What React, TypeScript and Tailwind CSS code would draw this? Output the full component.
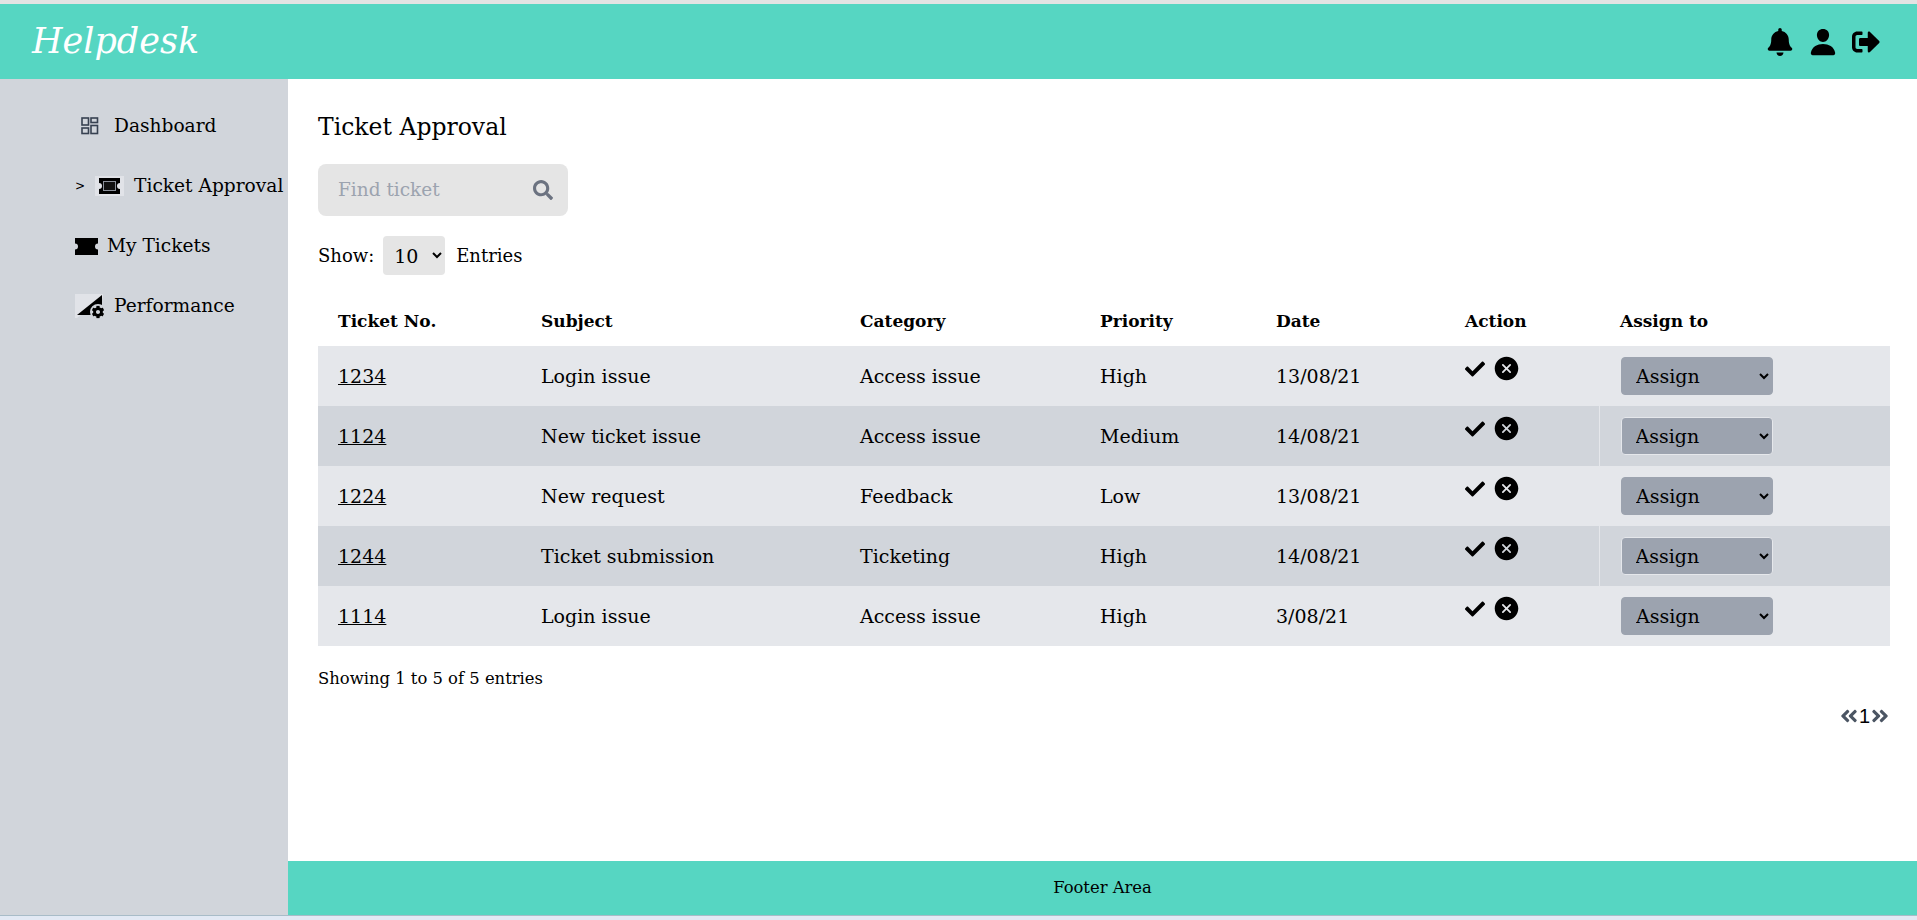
import { FaBell, FaSignOutAlt, FaCheck, FaSearch, FaAngleDoubleLeft, FaAngleDoubleRight, FaCog } from "react-icons/fa";
import { IoCloseCircle, IoPerson } from "react-icons/io5";

const rows = [
  ["1234", "Login issue", "Access issue", "High", "13/08/21"],
  ["1124", "New ticket issue", "Access issue", "Medium", "14/08/21"],
  ["1224", "New request", "Feedback", "Low", "13/08/21"],
  ["1244", "Ticket submission", "Ticketing", "High", "14/08/21"],
  ["1114", "Login issue", "Access issue", "High", "3/08/21"],
];

function GridIcon() {
  return (
    <svg width="18" height="18" viewBox="0 0 18 18" fill="none" stroke="#374151" strokeWidth="1.6">
      <rect x="1" y="1" width="6.5" height="7" />
      <rect x="10" y="1" width="6.5" height="4.5" />
      <rect x="1" y="11" width="6.5" height="5.5" />
      <rect x="10" y="8.5" width="6.5" height="8" />
    </svg>
  );
}

function TicketOutline() {
  return (
    <span className="flex h-5 w-[29px] items-center justify-center bg-[#e1e3e8]">
      <svg width="23" height="16" viewBox="0 0 23 16">
        <path d="M1 0h21v5a3 3 0 0 0 0 6v5H1v-5a3 3 0 0 0 0-6z" fill="#000" />
        <rect x="5" y="3" width="13" height="10" fill="#8a8f99" />
        <rect x="6" y="4" width="11" height="8" fill="#111" />
      </svg>
    </span>
  );
}

function TicketSolid() {
  return (
    <svg width="23" height="17" viewBox="0 0 23 17">
      <path d="M0 0h23v5.5a3 3 0 0 0 0 6V17H0v-5.5a3 3 0 0 0 0-6z" fill="#000" />
    </svg>
  );
}

function PerfIcon() {
  return (
    <svg width="30" height="25" viewBox="0 0 30 25">
      <polygon points="0,0 28,0 28,4 2,24 0,24" fill="#e1e3e8" />
      <path d="M2 21 L27 1 V21 H2 Z" fill="#000" />
      <circle cx="23" cy="18" r="8" fill="#d1d5db" />
      <FaCog x="16.5" y="11.5" size="13" />
    </svg>
  );
}

export default function App() {
  return (
    <div className="flex h-[920px] flex-col overflow-hidden bg-[#e2e9f4] text-[19px] text-black [font-family:'DejaVu_Serif',serif]">
      <div className="h-[4px] bg-[#e3e3e3]" />
      <header className="flex h-[75px] items-center justify-between bg-[#56d6c2] pl-[32px] pr-[37px]">
        <span className="text-[35px] italic leading-none text-white">Helpdesk</span>
        <div className="flex items-center gap-[14px] text-[28px]">
          <FaBell />
          <IoPerson className="text-[30px]" />
          <FaSignOutAlt />
        </div>
      </header>
      <div className="flex h-[836px]">
        <aside className="w-[288px] shrink-0 bg-[#d1d5db] text-[18.6px]">
          <div className="flex h-[60px] items-center gap-[15px] pl-[81px] pt-[34px]">
            <GridIcon />
            <span>Dashboard</span>
          </div>
          <div className="flex h-[60px] items-center pl-[75px] pt-[34px]">
            <span className="mr-[10px] text-[12px]">&gt;</span>
            <TicketOutline />
            <span className="ml-[10px] whitespace-nowrap">Ticket Approval</span>
          </div>
          <div className="flex h-[60px] items-center gap-[9px] pl-[75px] pt-[34px]">
            <TicketSolid />
            <span>My Tickets</span>
          </div>
          <div className="flex h-[60px] items-center gap-[9px] pl-[75px] pt-[34px]">
            <PerfIcon />
            <span>Performance</span>
          </div>
        </aside>
        <div className="flex min-w-0 flex-1 flex-col">
          <main className="flex-1 bg-white pl-[30px] pr-[27px] pt-[32px]">
            <h1 className="text-[23.5px] leading-[32px]">Ticket Approval</h1>
            <div className="mt-[21px] flex h-[52px] w-[250px] items-center justify-between rounded-lg bg-[#e5e5e5] pl-[20px] pr-[15px] text-[18.5px] text-[#9ca3af]">
              <span>Find ticket</span>
              <FaSearch className="text-[20px] text-[#6b7280]" />
            </div>
            <div className="mt-[20px] flex h-[39px] items-center text-[18px]">
              <span>Show:</span>
              <select className="ml-[9px] h-[39px] w-[62px] rounded bg-[#e5e5e5] pl-[7px] text-[19px]">
                <option>10</option>
              </select>
              <span className="ml-[11px]">Entries</span>
            </div>
            <table className="mt-[22px] w-[1572px] table-fixed border-collapse">
              <colgroup>
                <col className="w-[203px]" />
                <col className="w-[319px]" />
                <col className="w-[240px]" />
                <col className="w-[176px]" />
                <col className="w-[189px]" />
                <col className="w-[154px]" />
                <col className="w-[291px]" />
              </colgroup>
              <thead>
                <tr className="h-[49px] text-left text-[17px]">
                  {["Ticket No.", "Subject", "Category", "Priority", "Date", "Action"].map((h) => (
                    <th key={h} className="pl-[20px] font-bold">{h}</th>
                  ))}
                  <th className="pl-[21px] font-bold">Assign to</th>
                </tr>
              </thead>
              <tbody>
                {rows.map((r, i) => (
                  <tr key={r[0]} className={i % 2 ? "h-[60px] bg-[#d1d5db]" : "h-[60px] bg-[#e5e7eb]"}>
                    <td className="pl-[20px]"><a className="underline">{r[0]}</a></td>
                    <td className="pl-[20px]">{r[1]}</td>
                    <td className="pl-[20px]">{r[2]}</td>
                    <td className="pl-[20px]">{r[3]}</td>
                    <td className="pl-[20px]">{r[4]}</td>
                    <td className="pl-[20px]">
                      <div className="mb-[15px] flex items-center gap-[7px]">
                        <FaCheck className="text-[20px]" />
                        <IoCloseCircle className="text-[29px]" />
                      </div>
                    </td>
                    <td className={i % 2 ? "border-l border-[#e5e7eb] pl-[21px]" : "pl-[22px]"}>
                      <select className={i % 2 ? "h-[38px] w-[152px] rounded border border-[#e5e7eb] bg-[#9ca3af] pl-[10px] text-[19px]" : "h-[38px] w-[152px] rounded border border-[#9ca3af] bg-[#9ca3af] pl-[10px] text-[19px]"}>
                        <option>Assign</option>
                      </select>
                    </td>
                  </tr>
                ))}
              </tbody>
            </table>
            <p className="mt-[21px] text-[16.4px] leading-[24px]">Showing 1 to 5 of 5 entries</p>
            <div className="mt-[13px] flex items-center justify-end text-[#4b5563]">
              <FaAngleDoubleLeft className="text-[20px]" />
              <span className="text-[20px] leading-[24px] text-black [font-family:'Liberation_Sans',sans-serif]">1</span>
              <FaAngleDoubleRight className="text-[20px]" />
            </div>
          </main>
          <footer className="flex h-[54px] items-center justify-center bg-[#56d6c2] text-[16.4px]">Footer Area</footer>
        </div>
      </div>
      <div className="h-[1px] bg-[#a8bcc8]" />
    </div>
  );
}
